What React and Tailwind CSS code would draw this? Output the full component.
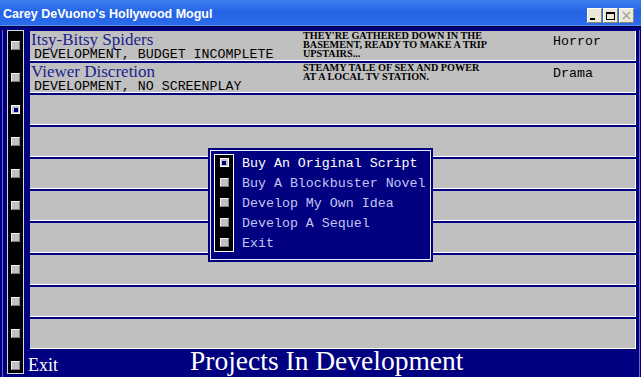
import React from 'react'

const projects = [
  {
    title: 'Itsy-Bitsy Spiders',
    status: 'DEVELOPMENT, BUDGET INCOMPLETE',
    blurb: ["THEY'RE GATHERED DOWN IN THE", 'BASEMENT, READY TO MAKE A TRIP', 'UPSTAIRS...'],
    genre: 'Horror',
  },
  {
    title: 'Viewer Discretion',
    status: 'DEVELOPMENT, NO SCREENPLAY',
    blurb: ['STEAMY TALE OF SEX AND POWER', 'AT A LOCAL TV STATION.'],
    genre: 'Drama',
  },
]

const menuItems = [
  'Buy An Original Script',
  'Buy A Blockbuster Novel',
  'Develop My Own Idea',
  'Develop A Sequel',
  'Exit',
]

const serif = { fontFamily: '"Liberation Serif", "Times New Roman", serif' }
const mono = { fontFamily: '"Liberation Mono", "Courier New", monospace' }

function Check({ on }) {
  if (on) {
    return (
      <div className="w-[9px] h-[9px] shrink-0 border border-white bg-[#c0c0c0] flex items-center justify-center">
        <div className="w-[4px] h-[4px] bg-[#000080]" />
      </div>
    )
  }
  return (
    <div className="w-[9px] h-[9px] shrink-0 bg-[#c0c0c0] border border-t-[#f0f0f0] border-l-[#f0f0f0] border-b-[#808080] border-r-[#808080]" />
  )
}

function TitleButton({ children }) {
  return (
    <div className="w-[15px] h-[15px] bg-[#ece9d8] border border-t-white border-l-white border-b-[#8a8676] border-r-[#8a8676] flex items-center justify-center">
      {children}
    </div>
  )
}

function Row({ project }) {
  return (
    <div className="h-[30px] bg-[#c0c0c0] border-b border-r border-white flex overflow-hidden">
      {project ? (
        <>
          <div className="w-[273px] pl-[1px] flex flex-col">
            <div className="text-[17px] leading-[17px] text-[#1c1c8a] whitespace-nowrap" style={serif}>
              {project.title}
            </div>
            <div className="text-[13.3px] leading-[13px] text-black pl-[3px] whitespace-nowrap" style={mono}>
              {project.status}
            </div>
          </div>
          <div className="w-[250px] flex flex-col">
            {project.blurb.map((line) => (
              <div key={line} className="text-[10.2px] leading-[9px] font-bold text-black whitespace-nowrap" style={serif}>
                {line}
              </div>
            ))}
          </div>
          <div className="pt-[4px] text-[13.3px] leading-[13px] text-black" style={mono}>
            {project.genre}
          </div>
        </>
      ) : null}
    </div>
  )
}

export default function App() {
  const rows = Array.from({ length: 10 }, (_, i) => projects[i] || null)

  return (
    <div className="relative w-[641px] h-[377px] overflow-hidden bg-[#000080] flex flex-col">
      {/* title bar */}
      <div className="h-[26px] shrink-0 bg-linear-to-b from-[#3a7ff0] via-[#2563e6] to-[#2a6cea] border-b border-[#5a94f0] flex items-start">
        <div
          className="pt-[8px] pl-[3px] text-[12.5px] leading-[12px] font-bold text-white whitespace-nowrap"
          style={{ fontFamily: '"Liberation Sans", Arial, sans-serif' }}
        >
          Carey DeVuono's Hollywood Mogul
        </div>
        <div className="ml-auto mr-[7px] mt-[8px] flex gap-[1px]">
          <TitleButton>
            <div className="w-[5px] h-[2px] bg-black mt-[7px] -ml-[4px]" />
          </TitleButton>
          <TitleButton>
            <div className="w-[9px] h-[8px] border border-black border-t-2" />
          </TitleButton>
          <TitleButton>
            <svg width="9" height="9" viewBox="0 0 9 9">
              <path d="M1 1 L8 8 M8 1 L1 8" stroke="#a8a8a0" strokeWidth="1.6" />
            </svg>
          </TitleButton>
        </div>
      </div>
      <div className="h-[1px] bg-[#00003c] shrink-0" />

      {/* body */}
      <div className="flex-1 flex pl-[2px] pt-[3px] min-h-0">
        <div className="w-[1px] bg-[#6c6cc8]" />
        {/* checkbox strip */}
        <div className="ml-[4px] w-[17px] mb-[3px] border border-[#d8d8d8] bg-black flex flex-col items-center pt-[10px] gap-[23px]">
          {Array.from({ length: 11 }, (_, i) => (
            <Check key={i} on={i === 2} />
          ))}
        </div>
        {/* project list */}
        <div className="ml-[6px] flex-1 flex flex-col pt-[1px]">
          <div className="flex flex-col gap-[2px]">
            {rows.map((p, i) => (
              <Row key={i} project={p} />
            ))}
          </div>
          <div className="flex items-start text-white -ml-[2px]" style={serif}>
            <div className="mt-[7px] text-[18px] leading-[18px]">Exit</div>
            <div className="ml-[132px] mt-[1px] text-[27.5px] leading-[22px] whitespace-nowrap">
              Projects In Development
            </div>
          </div>
        </div>
        <div className="ml-[3px] w-[1px] bg-[#6c6cc8]" />
        <div className="w-[1px]" />
      </div>

      {/* popup menu */}
      <div className="absolute left-[208px] top-[148px] border-2 border-[#000080]">
        <div className="w-[221px] h-[110px] border border-[#e8e8f8] bg-[#000080] flex pl-[3px] pt-[3px]">
          <div className="w-[20px] h-[98px] border border-white bg-black flex flex-col items-center pt-[3px] gap-[11px]">
            {menuItems.map((m, i) => (
              <Check key={m} on={i === 0} />
            ))}
          </div>
          <div className="ml-[8px] flex flex-col">
            {menuItems.map((m, i) => (
              <div
                key={m}
                className={`text-[13.3px] leading-[20px] whitespace-nowrap ${i === 0 ? 'text-white' : 'text-[#c4c4f4]'}`}
                style={mono}
              >
                {m}
              </div>
            ))}
          </div>
        </div>
      </div>
    </div>
  )
}
